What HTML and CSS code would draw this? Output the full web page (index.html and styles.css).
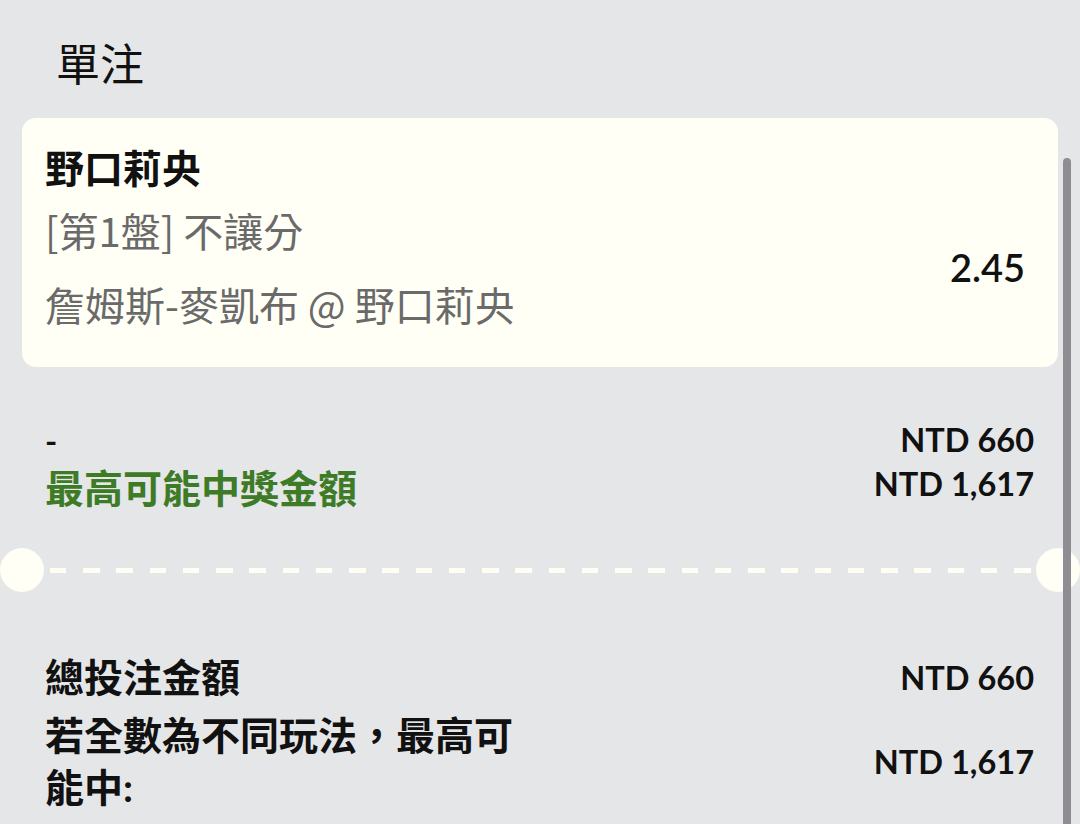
FILE: index.html
```html
<!DOCTYPE html>
<html lang="zh-Hant">
<head>
    <meta charset="UTF-8">
    <meta name="viewport" content="width=device-width, initial-scale=1.0">
    <title>單注</title>
    <link rel="stylesheet" href="styles.css">
</head>
<body>
    <header class="slip-title">單注</header>

    <div class="bet-card">
        <div class="bet-name">野口莉央</div>
        <div class="bet-row">
            <div class="bet-info">
                <div class="bet-market">[第1盤] 不讓分</div>
                <div class="bet-event">詹姆斯-麥凱布 @ 野口莉央</div>
            </div>
            <div class="bet-odds">2.45</div>
        </div>
    </div>

    <div class="stake">
        <div class="stake-labels">
            <div class="stake-dash">-</div>
            <div class="stake-win">最高可能中獎金額</div>
        </div>
        <div class="stake-values">
            <div>NTD 660</div>
            <div>NTD 1,617</div>
        </div>
    </div>

    <div class="ticket-cut">
        <span class="notch"></span>
        <span class="dashes"></span>
        <span class="notch"></span>
    </div>

    <div class="summary">
        <div class="summary-row">
            <div class="summary-label">總投注金額</div>
            <div class="summary-value">NTD 660</div>
        </div>
        <div class="summary-row">
            <div class="summary-label">若全數為不同玩法，最高可能中:</div>
            <div class="summary-value">NTD 1,617</div>
        </div>
    </div>

    <div class="scrollbar"></div>
</body>
</html>
```

FILE: styles.css
```css
body {
    margin: 0;
    background-color: #e5e6e8;
    color: #111;
    font-family: "Lato", "Noto Sans CJK TC", sans-serif;
    overflow: hidden;
}

.slip-title {
    padding: 36px 56px 26px;
    font-size: 44px;
    line-height: 56px;
}

.bet-card {
    margin: 0 22px;
    padding: 18px 33px 31px 23px;
    background: #fffff6;
    border-radius: 14px;
}

.bet-name {
    font-size: 39px;
    font-weight: bold;
    line-height: 64px;
}

.bet-row {
    display: flex;
    align-items: center;
    justify-content: space-between;
    margin-top: -2px;
}

.bet-market, .bet-event {
    font-family: "Noto Sans CJK TC", sans-serif;
    font-size: 40px;
    line-height: 64px;
    color: #6a6a6a;
}

.bet-event {
    margin-top: 10px;
}

.bet-odds {
    font-size: 38px;
    font-weight: 600;
}

.stake {
    display: flex;
    justify-content: space-between;
    padding: 51px 46px 0 45px;
}

.stake-dash {
    font-size: 33px;
    font-weight: bold;
    line-height: 44px;
}

.stake-win {
    font-size: 39px;
    font-weight: bold;
    line-height: 52px;
    color: #3e7b27;
}

.stake-values {
    text-align: right;
    font-size: 32.5px;
    font-weight: bold;
    line-height: 44px;
}

.ticket-cut {
    display: flex;
    align-items: center;
    margin-top: 34px;
}

.notch {
    width: 44px;
    height: 44px;
    border-radius: 50%;
    background: #fffff5;
}

.dashes {
    flex: 1;
    height: 5px;
    margin: 0 5px 0 6px;
    background: repeating-linear-gradient(90deg, #fffff5 0 16.5px, transparent 16.5px 33.25px);
}

.summary {
    display: flex;
    flex-direction: column;
    gap: 6px;
    padding: 59px 46px 0 45px;
}

.summary-row {
    display: flex;
    align-items: center;
    justify-content: space-between;
}

.summary-label {
    max-width: 480px;
    font-size: 39px;
    font-weight: bold;
    line-height: 52px;
}

.summary-value {
    font-size: 32.5px;
    font-weight: bold;
}

.scrollbar {
    position: fixed;
    top: 158px;
    right: 9px;
    width: 8px;
    height: 700px;
    border-radius: 4px;
    background: #8e8e92;
}
```
